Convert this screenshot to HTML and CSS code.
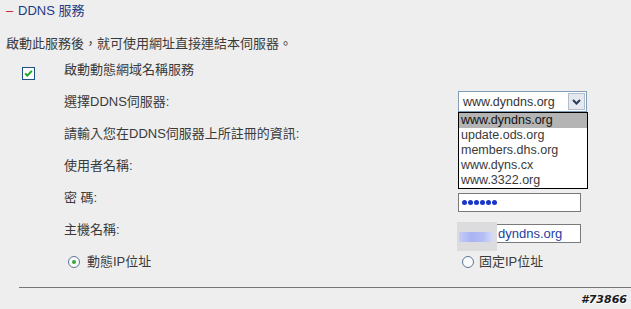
FILE: index.html
```html
<!DOCTYPE html>
<html lang="zh-Hant">
<head>
<meta charset="utf-8">
<title>DDNS 服務</title>
<link rel="stylesheet" href="styles.css">
</head>
<body>
<div class="page">
  <div class="title"><span class="dash">–</span><span class="title-text">DDNS 服務</span></div>
  <p class="desc">啟動此服務後，就可使用網址直接連結本伺服器。</p>
  <div class="form">
    <div class="row">
      <span class="checkbox">
        <svg width="13" height="13" viewBox="0 0 13 13"><rect x="0.5" y="0.5" width="12" height="12" fill="#fbfbfb" stroke="#1c5180"/><path d="M3.2 6.4 L5.3 8.6 L9.8 3.9" fill="none" stroke="#21a121" stroke-width="2"/></svg>
      </span>
      <span class="label">啟動動態網域名稱服務</span>
    </div>
    <div class="row">
      <span class="label">選擇DDNS伺服器:</span>
      <div class="select">
        <span class="select-value">www.dyndns.org</span>
        <span class="select-btn">
          <svg width="9" height="6" viewBox="0 0 9 6"><path d="M1 1 L4.5 4.5 L8 1" fill="none" stroke="#2c3b58" stroke-width="2"/></svg>
        </span>
        <ul class="options">
          <li class="selected">www.dyndns.org</li>
          <li>update.ods.org</li>
          <li>members.dhs.org</li>
          <li>www.dyns.cx</li>
          <li>www.3322.org</li>
        </ul>
      </div>
    </div>
    <div class="row"><span class="label">請輸入您在DDNS伺服器上所註冊的資訊:</span></div>
    <div class="row"><span class="label">使用者名稱:</span></div>
    <div class="row">
      <span class="label">密 碼:</span>
      <div class="input input-pw"><i></i><i></i><i></i><i></i><i></i><i></i></div>
    </div>
    <div class="row">
      <span class="label">主機名稱:</span>
      <div class="input input-host">
        <span class="blur"><span class="blur-band"></span></span>
        <span class="host-text">dyndns.org</span>
      </div>
    </div>
    <div class="row">
      <label class="radio-item radio-first"><span class="radio checked"></span><span>動態IP位址</span></label>
      <label class="radio-item radio-second"><span class="radio"></span><span>固定IP位址</span></label>
    </div>
  </div>
  <div class="rule"></div>
  <div class="mark">#73866</div>
</div>
</body>
</html>
```

FILE: styles.css
```css
html, body {
  margin: 0;
  padding: 0;
  background: #eeeeee;
}

body {
  width: 631px;
  height: 309px;
  overflow: hidden;
  font-family: "Liberation Sans", "Noto Sans CJK TC", sans-serif;
  font-size: 13px;
  color: #3a3a3a;
}

.title {
  height: 22px;
  line-height: 22px;
  display: flex;
  align-items: center;
  padding-left: 6px;
}

.dash {
  color: #c8202a;
  width: 12px;
  font-size: 13px;
}

.title-text {
  color: #1e3a84;
}

.desc {
  margin: 12px 0 0 6px;
  height: 20px;
  line-height: 20px;
}

.form {
  display: flex;
  flex-direction: column;
}

.row {
  display: grid;
  grid-template-columns: 64px 394px 1fr;
  height: 32px;
  align-items: center;
  line-height: 16px;
}

.label {
  grid-column: 2;
}

.checkbox {
  grid-column: 1;
  align-self: start;
  margin: 13px 0 0 22px;
  width: 13px;
  height: 13px;
  display: block;
}

.checkbox svg {
  display: block;
}

.select {
  grid-column: 3;
  align-self: start;
  margin-top: 5px;
  position: relative;
  width: 129px;
  height: 21px;
  box-sizing: border-box;
  border: 1px solid #7f9db9;
  background: #ffffff;
  display: flex;
  align-items: center;
}

.select-value {
  padding-left: 4px;
  flex: 1;
  color: #333333;
  font-size: 12.5px;
}

.select-btn {
  width: 17px;
  height: 17px;
  margin-right: 1px;
  box-sizing: border-box;
  border: 1px solid #b3bdcc;
  background: #e4e8ef;
  display: flex;
  align-items: center;
  justify-content: center;
}

.select-btn svg {
  display: block;
}

.options {
  position: absolute;
  left: -1px;
  top: 20px;
  width: 130px;
  margin: 0;
  padding: 0;
  list-style: none;
  box-sizing: border-box;
  border: 1px solid #000000;
  background: #ffffff;
  z-index: 2;
}

.options li {
  height: 15px;
  line-height: 15px;
  padding-left: 2px;
  color: #3a3a3a;
  font-size: 12.5px;
}

.options li.selected {
  background: #b4b4b4;
  color: #111111;
}

.input {
  grid-column: 3;
  align-self: start;
  width: 123px;
  height: 19px;
  box-sizing: border-box;
  border: 1px solid #7a7a7a;
  background: #ffffff;
  display: flex;
  align-items: center;
  position: relative;
}

.input-pw {
  margin-top: 11px;
  padding-left: 3px;
  gap: 1px;
}

.input-pw i {
  width: 5px;
  height: 5px;
  border-radius: 50%;
  background: #1a36c8;
}

.input-host {
  margin-top: 10px;
  padding-left: 39px;
}

.blur {
  position: absolute;
  left: -2px;
  top: -3px;
  width: 40px;
  height: 29px;
  background: #dcdcdf;
  display: flex;
  align-items: center;
}

.blur-band {
  margin-left: 2px;
  width: 34px;
  height: 10px;
  background: linear-gradient(90deg, #c6cdf6 0%, #a9b4f2 35%, #b4bdf4 70%, #d6dbf6 100%);
}

.host-text {
  color: #2540a2;
  font-size: 13px;
}

.radio-item {
  display: flex;
  align-items: center;
  gap: 7px;
}

.radio-first {
  grid-column: 2;
  margin-left: 4px;
}

.radio-second {
  grid-column: 3;
  margin-left: 4px;
  gap: 5px;
}

.radio {
  width: 12px;
  height: 12px;
  box-sizing: border-box;
  border: 1px solid #5b7899;
  border-radius: 50%;
  background: #fafafa;
  display: flex;
  align-items: center;
  justify-content: center;
}

.radio.checked::after {
  content: "";
  width: 4px;
  height: 4px;
  border-radius: 50%;
  background: #34a834;
}

.rule {
  margin: 9px 0 0 19px;
  height: 1px;
  background: #767676;
}

.mark {
  margin-top: 5px;
  padding-right: 4px;
  text-align: right;
  font-family: "DejaVu Sans", sans-serif;
  font-size: 11px;
  font-weight: bold;
  font-style: italic;
  color: #1a1a1a;
  text-shadow: 1px 1px 0 #ffffff;
  line-height: 13px;
}
```
